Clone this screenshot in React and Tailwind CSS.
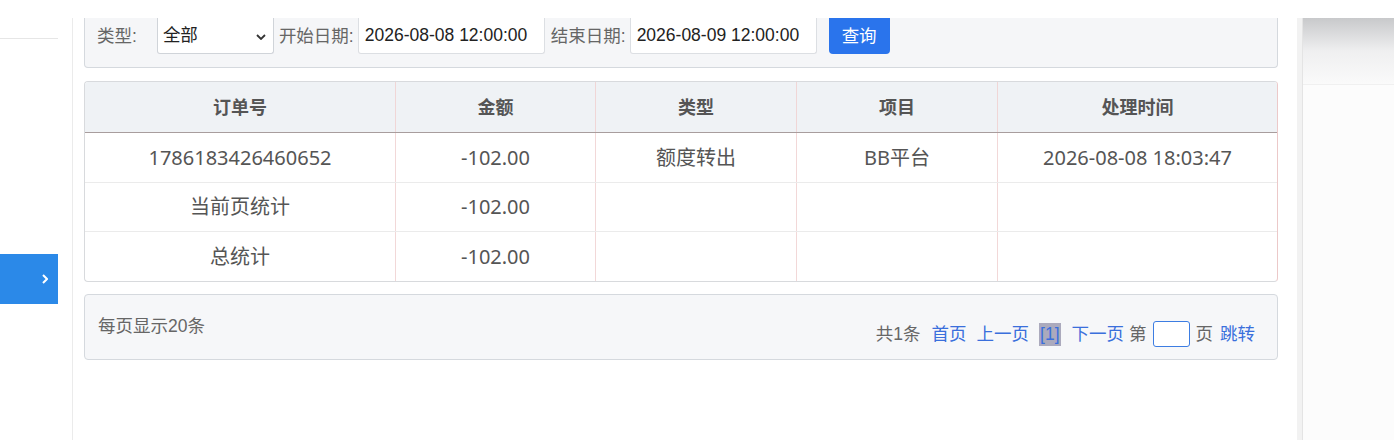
import { useState } from 'react';

const cjk = "font-['Liberation_Sans','Noto_Sans_CJK_SC',sans-serif]";
const body = "font-['Noto_Sans','Noto_Sans_CJK_SC',sans-serif]";

const COLS = [
  { key: 'order', label: '订单号', w: 'w-[311px]' },
  { key: 'amount', label: '金额', w: 'w-[200px]' },
  { key: 'type', label: '类型', w: 'w-[201px]' },
  { key: 'item', label: '项目', w: 'w-[201px]' },
  { key: 'time', label: '处理时间', w: 'flex-1' },
];

const ROWS = [
  { order: '1786183426460652', amount: '-102.00', type: '额度转出', item: 'BB平台', time: '2026-08-08 18:03:47', h: 'h-[50px]' },
  { order: '当前页统计', amount: '-102.00', type: '', item: '', time: '', h: 'h-[49px]' },
  { order: '总统计', amount: '-102.00', type: '', item: '', time: '', h: 'h-[49px]' },
];

const Chevron = ({ className }) => (
  <svg viewBox="0 0 10 6" className={className} fill="none" stroke="currentColor" strokeWidth="1.8">
    <path d="M1 1l4 4 4-4" />
  </svg>
);

const FilterBar = () => {
  const [type, setType] = useState('全部');
  return (
    <div className={`flex items-start h-[50px] bg-[#f5f6f8] border border-t-0 border-[#d5d9de] rounded-b-[4px] pl-[12px] ${cjk} text-[17.5px]`}>
      <div className="flex items-center h-[36px]">
        <span className="text-[#666]">类型:</span>
        <div className="relative ml-[20px] w-[117px] h-[36px] bg-white border border-t-0 border-[#d0d4d9] rounded-b-[3px] flex items-center pl-[5px] text-[#222]">
          <span>{type}</span>
          <Chevron className="absolute right-[7px] top-[16px] w-[10px] h-[6px] text-[#333]" />
        </div>
        <span className="ml-[5px] text-[#666]">开始日期:</span>
        <div className="ml-[4px] w-[187px] h-[36px] bg-white border border-t-0 border-[#dcdfe3] rounded-b-[3px] flex items-center pl-[6px] text-[#222]">
          2026-08-08 12:00:00
        </div>
        <span className="ml-[6px] text-[#666]">结束日期:</span>
        <div className="ml-[4px] w-[187px] h-[36px] bg-white border border-t-0 border-[#dcdfe3] rounded-b-[3px] flex items-center pl-[6px] text-[#222]">
          2026-08-09 12:00:00
        </div>
        <button
          onClick={() => setType('全部')}
          className="ml-[12px] w-[61px] h-[36px] bg-[#2a74ec] text-white rounded-b-[4px] flex items-center justify-center"
        >
          查询
        </button>
      </div>
    </div>
  );
};

const DataTable = () => (
  <div className={`mt-[13px] border border-[#d8dadd] border-r-[#ecc9c9] rounded-[4px] overflow-hidden ${body}`}>
    <div className="flex h-[51px] bg-[#eff2f5] border-b border-[#a89d9d]">
      {COLS.map((c, i) => (
        <div
          key={c.key}
          className={`${c.w} flex items-center justify-center text-[18px] font-bold text-[#555] ${i < COLS.length - 1 ? 'border-r border-[#f0d6d6]' : ''}`}
        >
          {c.label}
        </div>
      ))}
    </div>
    {ROWS.map((r, ri) => (
      <div key={ri} className={`flex ${r.h} ${ri < ROWS.length - 1 ? 'border-b border-[#ebebeb]' : ''}`}>
        {COLS.map((c, i) => (
          <div
            key={c.key}
            className={`${c.w} flex items-center justify-center text-[20px] text-[#555] ${i < COLS.length - 1 ? 'border-r border-[#f2d8d8]' : ''}`}
          >
            {r[c.key]}
          </div>
        ))}
      </div>
    ))}
  </div>
);

const Pager = () => {
  const [page, setPage] = useState('');
  return (
    <div className={`mt-[12px] h-[66px] flex justify-between bg-[#f6f7f9] border border-[#d5d9de] rounded-[4px] pl-[13px] pr-[22px] pt-[19px] ${cjk} text-[17.5px] leading-[24px]`}>
      <span className="text-[#666]">每页显示20条</span>
      <div className="flex items-center h-[26px] mt-[7px] text-[#666]">
        <span>共1条</span>
        <a className="ml-[11px] text-[#3a6fdc]">首页</a>
        <a className="ml-[10px] text-[#3a6fdc]">上一页</a>
        <span className="ml-[10px] px-[1px] bg-[#abaabd] text-[#3a6fdc] leading-[23px]">[1]</span>
        <a className="ml-[11px] text-[#3a6fdc]">下一页</a>
        <span className="ml-[5px]">第</span>
        <input
          value={page}
          onChange={(e) => setPage(e.target.value)}
          className="ml-[6px] w-[37px] h-[26px] bg-white border border-[#3d7de2] rounded-[3px] outline-none px-1 text-[14px]"
        />
        <span className="ml-[6px]">页</span>
        <a className="ml-[7px] text-[#3a6fdc]">跳转</a>
      </div>
    </div>
  );
};

export default function App() {
  return (
    <div className="w-[1394px] h-[440px] bg-white flex flex-col overflow-hidden">
      <div className="h-[18px] shrink-0 bg-white" />
      <div className="flex flex-1">
        {/* collapsed side menu */}
        <div className="w-[58px] shrink-0 flex flex-col">
          <div className="h-[21px] border-b border-[#e6e6e6]" />
          <div className="mt-[215px] h-[50px] bg-[#2b89e8] flex items-center justify-end pr-[10px]">
            <svg viewBox="0 0 6 10" className="w-[6px] h-[10px] text-white" fill="none" stroke="currentColor" strokeWidth="2">
              <path d="M1 1l4 4-4 4" />
            </svg>
          </div>
        </div>
        <div className="w-[15px] shrink-0 border-r border-[#ebebeb]" />

        <main className="w-[1224px] shrink-0 pl-[11px] pr-[19px]">
          <FilterBar />
          <DataTable />
          <Pager />
        </main>

        <div className="w-[6px] shrink-0 bg-[#f2f2f2] border-r border-[#e4e4e4]" />
        <div className="flex-1 bg-[#fcfcfc] flex flex-col">
          <div className="h-[67px] bg-gradient-to-b from-[#c8c9cb] via-[#efeff0] to-[#fafafa] border-b border-[#f0f0f0]" />
        </div>
      </div>
    </div>
  );
}
